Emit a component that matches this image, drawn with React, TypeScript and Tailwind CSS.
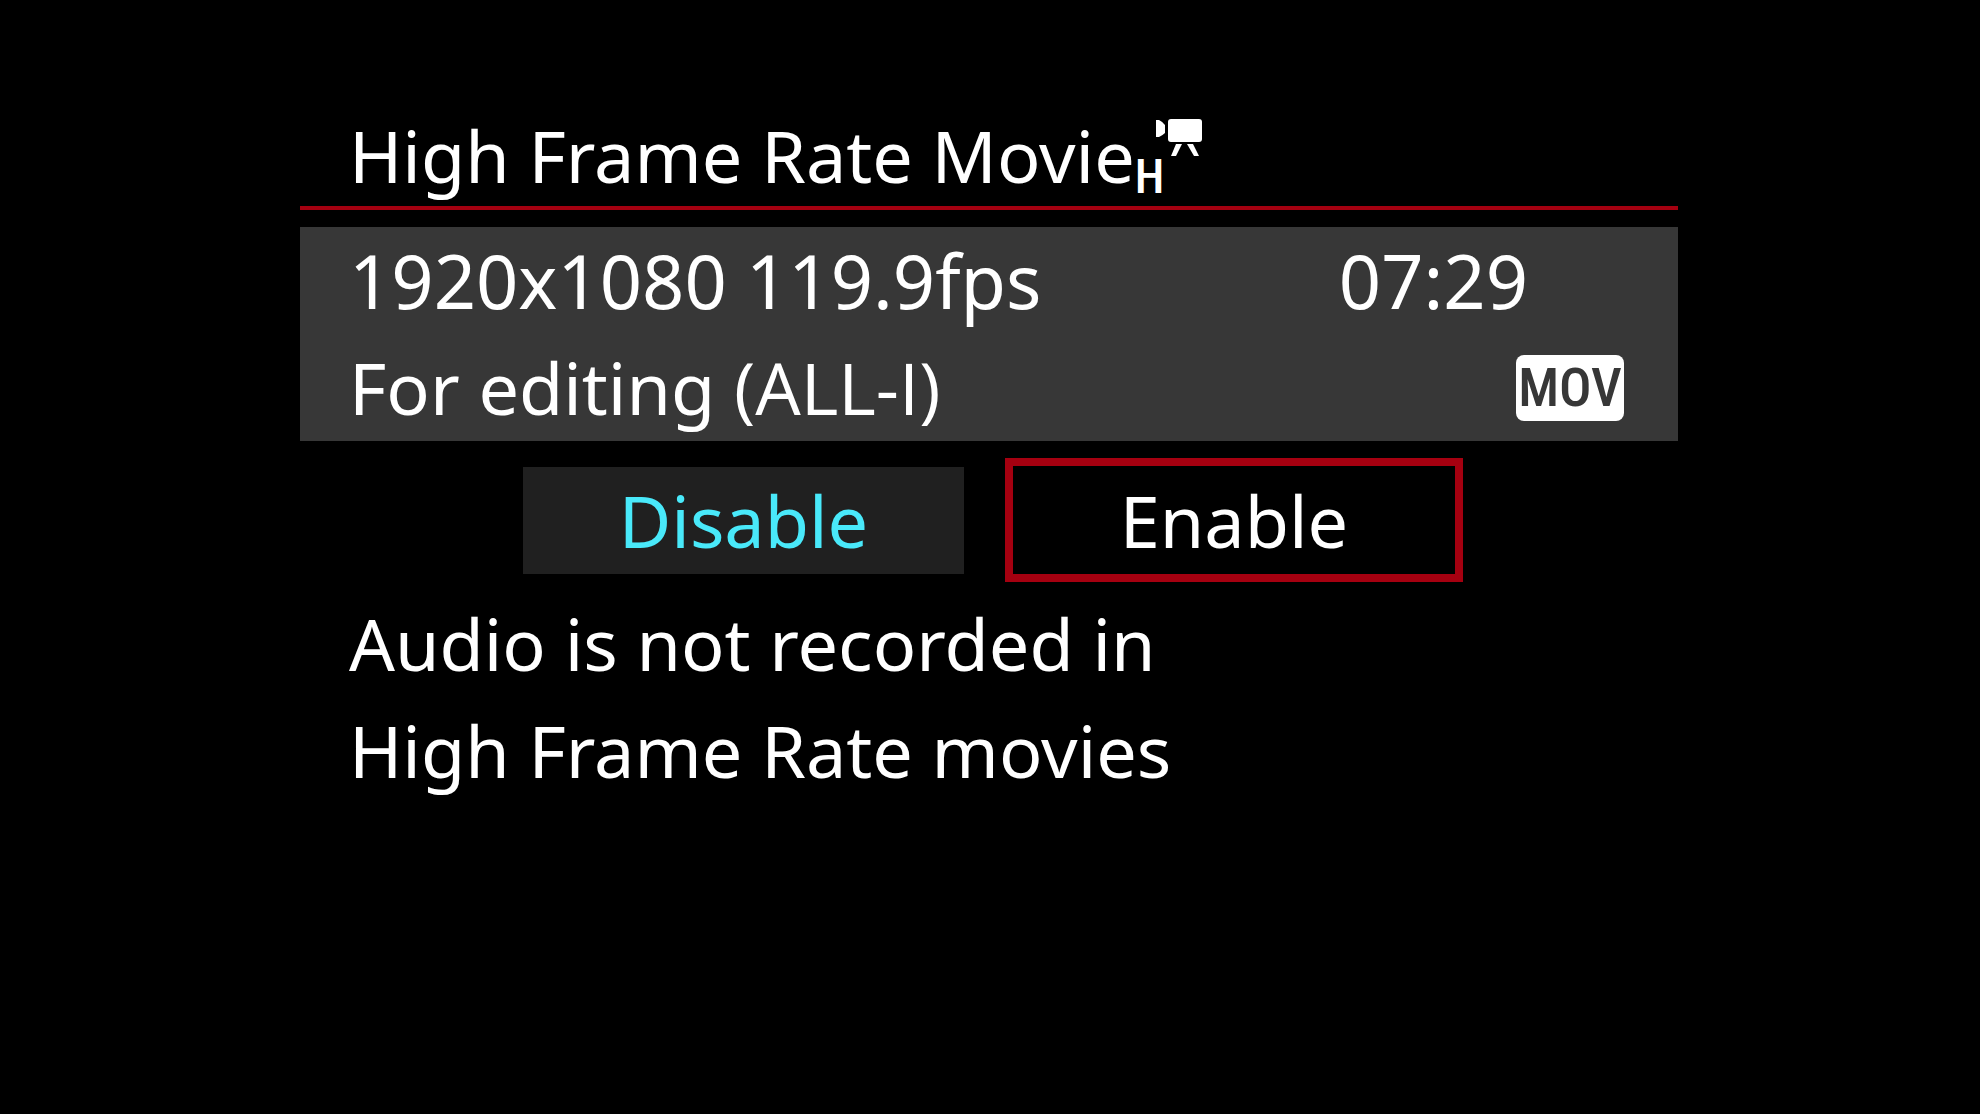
import React from "react";

function MovieCameraIcon({ className }: { className?: string }) {
  return (
    <svg className={className} viewBox="0 0 46 38" fill="#fff" aria-hidden="true">
      <path d="M0 1h3q4 2 6 5v8q-2 2-6 4H0z" />
      <rect x="12" y="0" width="34" height="23" rx="3" />
      <path d="M20 25h6l-6 12h-5z" />
      <path d="M31 25h6l6 12h-5z" />
    </svg>
  );
}

function Row({ children }: { children: React.ReactNode }) {
  return <div className="flex h-[107px] items-center justify-between pr-[54px] pl-[49px]">{children}</div>;
}

export default function App() {
  return (
    <main className="min-h-screen bg-black pt-[102px] pr-[2px] font-['Noto_Sans',sans-serif] text-[72px] leading-[107px] whitespace-nowrap text-white">
      <div className="mx-auto w-full max-w-[1378px]">
        <header className="flex h-[108px] border-b-4 border-[#a50010] pl-[49px]">
          <h1>High Frame Rate Movie</h1>
          <span className="flex items-start pt-[17px]">
            <span className="pt-[30px] font-['Roboto_Condensed','Roboto',sans-serif] text-[48px] leading-[56px] font-medium">
              H
            </span>
            <MovieCameraIcon className="-ml-2 h-[38px] w-[46px]" />
          </span>
        </header>

        <section className="mt-[17px] bg-[#373737]">
          <Row>
            <span className="text-[74px]">1920x1080 119.9fps</span>
            <span className="pr-[96px] text-[74px]">07:29</span>
          </Row>
          <Row>
            <span>
              For editing <span className="font-['Open_Sans',sans-serif]">(ALL-I)</span>
            </span>
            <span className="flex h-[66px] w-[108px] items-center justify-center rounded-lg bg-white font-['Roboto_Condensed','Roboto',sans-serif] text-[54px] leading-[66px] font-medium text-[#373737]">
              MOV
            </span>
          </Row>
        </section>

        <div className="mt-[17px] flex items-center gap-[41px] pl-[223px]">
          <button type="button" className="h-[107px] w-[441px] bg-[#202020] text-[#49e9fa]">
            Disable
          </button>
          <button type="button" className="h-[124px] w-[458px] border-8 border-[#a50010] bg-black">
            Enable
          </button>
        </div>

        <p className="mt-2 pl-[49px]">
          Audio is not recorded in
          <br />
          High Frame Rate movies
        </p>
      </div>
    </main>
  );
}
